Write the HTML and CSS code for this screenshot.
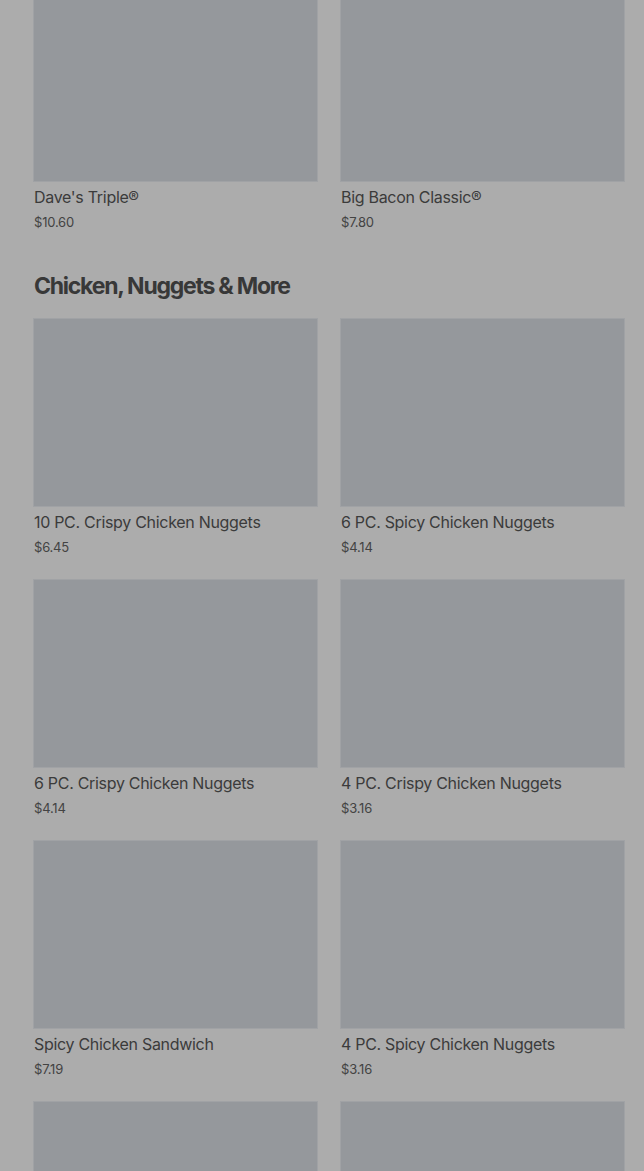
FILE: index.html
```html
<!DOCTYPE html>
<html>
    <head>
        <meta charset='utf-8'>
        <title>Menu</title>
        <link rel="stylesheet" href="styles.css">
    </head>
    <body>
        <div class="menu">
            <div class="grid first">
                <div class="card"><div class="pic"></div><div class="name">Dave's Triple&reg;</div><div class="price">$10.60</div></div>
                <div class="card"><div class="pic"></div><div class="name">Big Bacon Classic&reg;</div><div class="price">$7.80</div></div>
            </div>
            <h2 class="heading">Chicken, Nuggets &amp; More</h2>
            <div class="grid">
                <div class="card"><div class="pic"></div><div class="name">10 PC. Crispy Chicken Nuggets</div><div class="price">$6.45</div></div>
                <div class="card"><div class="pic"></div><div class="name">6 PC. Spicy Chicken Nuggets</div><div class="price">$4.14</div></div>
                <div class="card"><div class="pic"></div><div class="name">6 PC. Crispy Chicken Nuggets</div><div class="price">$4.14</div></div>
                <div class="card"><div class="pic"></div><div class="name">4 PC. Crispy Chicken Nuggets</div><div class="price">$3.16</div></div>
                <div class="card"><div class="pic"></div><div class="name">Spicy Chicken Sandwich</div><div class="price">$7.19</div></div>
                <div class="card"><div class="pic"></div><div class="name">4 PC. Spicy Chicken Nuggets</div><div class="price">$3.16</div></div>
                <div class="card"><div class="pic"></div></div>
                <div class="card"><div class="pic"></div></div>
            </div>
        </div>
    </body>
</html>
```

FILE: styles.css
```css
html, body {
    margin: 0;
    background: #acacac;
    overflow: hidden;
}
body {
    font: 16px/20px Inter, "Liberation Sans", sans-serif;
    color: #3a3a3a;
}
.menu {
    padding: 0 20px 0 34px;
}
.grid {
    display: grid;
    grid-template-columns: 283px 283px;
    column-gap: 24px;
    row-gap: 24px;
}
.first {
    margin-top: -6px;
}
.pic {
    height: 187px;
    background: #95989c;
    box-shadow: 0 0 0 1px #a0a2a5;
}
.name {
    margin-top: 6px;
    font-size: 16px;
    line-height: 20px;
    letter-spacing: -0.3px;
    color: #3b3b3b;
}
.price {
    margin-top: 6px;
    font-size: 13px;
    line-height: 18px;
    letter-spacing: -0.2px;
    color: #434343;
}
.heading {
    margin: 39px 0 17px;
    font-size: 23px;
    line-height: 32px;
    font-weight: 700;
    letter-spacing: -1.25px;
    color: #383838;
}
```
